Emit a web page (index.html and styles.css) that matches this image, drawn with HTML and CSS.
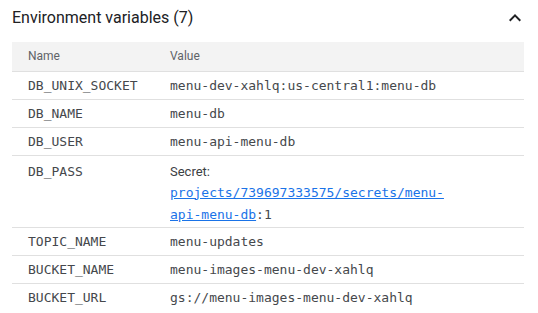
FILE: index.html
```html
<!DOCTYPE html>
<html lang="en">
<head>
  <meta charset="UTF-8">
  <title>Environment variables</title>
  <link rel="stylesheet" href="styles.css">
</head>
<body>

  <!-- Section header -->
  <div class="section-head">
    <h2>Environment variables (7)</h2>
    <button class="collapse-btn" aria-label="Collapse">
      <svg width="24" height="24" viewBox="0 0 24 24"><path d="M12 8l-6 6 1.41 1.41L12 10.83l4.59 4.58L18 14z"/></svg>
    </button>
  </div>

  <table class="env-table">
    <thead>
      <tr>
        <th class="col-name">Name</th>
        <th>Value</th>
      </tr>
    </thead>
    <tbody>
      <tr><td>DB_UNIX_SOCKET</td><td>menu-dev-xahlq:us-central1:menu-db</td></tr>
      <tr><td>DB_NAME</td><td>menu-db</td></tr>
      <tr><td>DB_USER</td><td>menu-api-menu-db</td></tr>
      <tr class="secret-row">
        <td>DB_PASS</td>
        <td>
          <div class="secret-label">Secret:</div>
          <div class="secret-ref"><a href="#">projects/739697333575/secrets/menu-api-menu-db</a><span>:1</span></div>
        </td>
      </tr>
      <tr><td>TOPIC_NAME</td><td>menu-updates</td></tr>
      <tr><td>BUCKET_NAME</td><td>menu-images-menu-dev-xahlq</td></tr>
      <tr><td>BUCKET_URL</td><td>gs://menu-images-menu-dev-xahlq</td></tr>
    </tbody>
  </table>

</body>
</html>
```

FILE: styles.css
```css
* {
  box-sizing: border-box;
}

body {
  margin: 0;
  padding: 8px 12px;
  background: #fff;
  font-family: Roboto, 'Liberation Sans', sans-serif;
  color: #202124;
}

.section-head {
  display: flex;
  align-items: center;
  justify-content: space-between;
  height: 20px;
  margin-bottom: 14px;
}

.section-head h2 {
  margin: 0;
  font-size: 16px;
  font-weight: 400;
  line-height: 20px;
}

.collapse-btn {
  border: none;
  background: none;
  padding: 0;
  margin-right: -1px;
  width: 24px;
  height: 24px;
  cursor: pointer;
}

.collapse-btn svg {
  display: block;
  fill: #202124;
}

.env-table {
  width: 512px;
  border-collapse: collapse;
}

.env-table th {
  background: #f3f3f3;
  color: #5f6368;
  font-size: 12px;
  font-weight: 400;
  text-align: left;
  height: 29px;
  padding: 0 16px;
  border-bottom: 1px solid #e0e0e0;
}

.env-table th.col-name {
  width: 142px;
}

.env-table td {
  font-family: 'DejaVu Sans Mono', 'Liberation Mono', monospace;
  font-size: 13px;
  color: #45484c;
  line-height: 16px;
  padding: 6px 16px 5px;
  border-bottom: 1px solid #e0e0e0;
  vertical-align: top;
}

.env-table tbody tr:last-child td {
  border-bottom: none;
}

.secret-row td {
  padding-bottom: 1px;
}

.secret-row td:first-child {
  line-height: 20px;
  padding-top: 6px;
}

.secret-label {
  font-family: Roboto, 'Liberation Sans', sans-serif;
  font-size: 13px;
  line-height: 20px;
  color: #3c4043;
}

.secret-ref {
  max-width: 290px;
  line-height: 22px;
}

.secret-ref a {
  color: #1a73e8;
  text-decoration: underline;
}
```
